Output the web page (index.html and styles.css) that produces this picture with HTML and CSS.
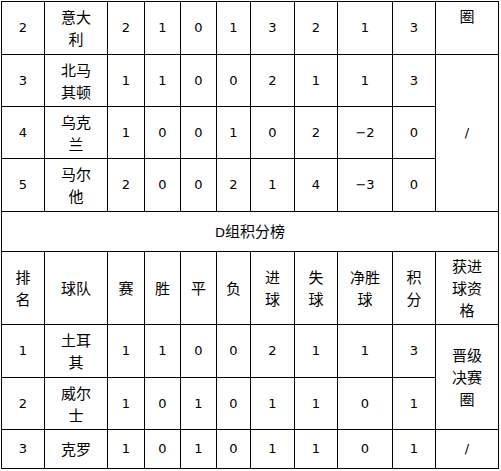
FILE: index.html
```html
<!DOCTYPE html>
<html lang="zh">
<head>
<meta charset="utf-8">
<link rel="stylesheet" href="styles.css">
</head>
<body>
<table class="standings">
  <colgroup>
    <col class="c-rank"><col class="c-team"><col class="c-p"><col class="c-w"><col class="c-d"><col class="c-l"><col class="c-gf"><col class="c-ga"><col class="c-gd"><col class="c-pts"><col class="c-q">
  </colgroup>
  <tbody>
    <tr class="r53">
      <td>2</td><td class="zh">意大<br>利</td><td>2</td><td>1</td><td>0</td><td>1</td><td>3</td><td>2</td><td>1</td><td>3</td>
      <td class="zh tail">圈</td>
    </tr>
    <tr class="r52">
      <td>3</td><td class="zh">北马<br>其顿</td><td>1</td><td>1</td><td>0</td><td>0</td><td>2</td><td>1</td><td>1</td><td>3</td>
      <td rowspan="3">/</td>
    </tr>
    <tr class="r52">
      <td>4</td><td class="zh">乌克<br>兰</td><td>1</td><td>0</td><td>0</td><td>1</td><td>0</td><td>2</td><td>−2</td><td>0</td>
    </tr>
    <tr class="r53">
      <td>5</td><td class="zh">马尔<br>他</td><td>2</td><td>0</td><td>0</td><td>2</td><td>1</td><td>4</td><td>−3</td><td>0</td>
    </tr>
    <tr class="r40">
      <td colspan="11" class="title">D<span class="zh">组积分榜</span></td>
    </tr>
    <tr class="r73 zh">
      <td>排<br>名</td><td>球队</td><td>赛</td><td>胜</td><td>平</td><td>负</td><td>进<br>球</td><td>失<br>球</td><td>净胜<br>球</td><td>积<br>分</td><td>获进<br>球资<br>格</td>
    </tr>
    <tr class="r53">
      <td>1</td><td class="zh">土耳<br>其</td><td>1</td><td>1</td><td>0</td><td>0</td><td>2</td><td>1</td><td>1</td><td>3</td>
      <td rowspan="2" class="zh">晋级<br>决赛<br>圈</td>
    </tr>
    <tr class="r52">
      <td>2</td><td class="zh">威尔<br>士</td><td>1</td><td>0</td><td>1</td><td>0</td><td>1</td><td>1</td><td>0</td><td>1</td>
    </tr>
    <tr class="r39">
      <td>3</td><td class="zh">克罗</td><td>1</td><td>0</td><td>1</td><td>0</td><td>1</td><td>1</td><td>0</td><td>1</td><td>/</td>
    </tr>
  </tbody>
</table>
</body>
</html>
```

FILE: styles.css
```css
html, body {
  margin: 0;
  padding: 0;
  background: #fff;
}
body {
  padding: 1px 0 0 1px;
  font-family: "DejaVu Sans", "Noto Sans CJK SC", sans-serif;
  font-size: 13px;
  color: #000;
}
.standings {
  table-layout: fixed;
  width: 498px;
  border-collapse: separate;
  border-spacing: 0;
  border-top: 1px solid #000;
  border-left: 1px solid #000;
}
.c-rank { width: 43px; }
.c-team { width: 63px; }
.c-p { width: 37px; }
.c-w { width: 36px; }
.c-d { width: 36px; }
.c-l { width: 34px; }
.c-gf { width: 44px; }
.c-ga { width: 43px; }
.c-gd { width: 55px; }
.c-pts { width: 43px; }
.c-q { width: 63px; }
.standings td {
  border-right: 1px solid #000;
  border-bottom: 1px solid #000;
  padding: 0 4px;
  text-align: center;
  vertical-align: middle;
  line-height: 22px;
  white-space: nowrap;
}
.zh, .standings .zh td {
  font-family: "Noto Sans CJK SC", sans-serif;
  font-size: 15px;
  line-height: 22px;
}
.standings td.tail {
  vertical-align: top;
  padding-top: 3px;
}
.title .zh {
  font-size: 15px;
}
.r53 { height: 53px; }
.r52 { height: 52px; }
.r40 { height: 40px; }
.r73 { height: 73px; }
.r39 { height: 39px; }
```
